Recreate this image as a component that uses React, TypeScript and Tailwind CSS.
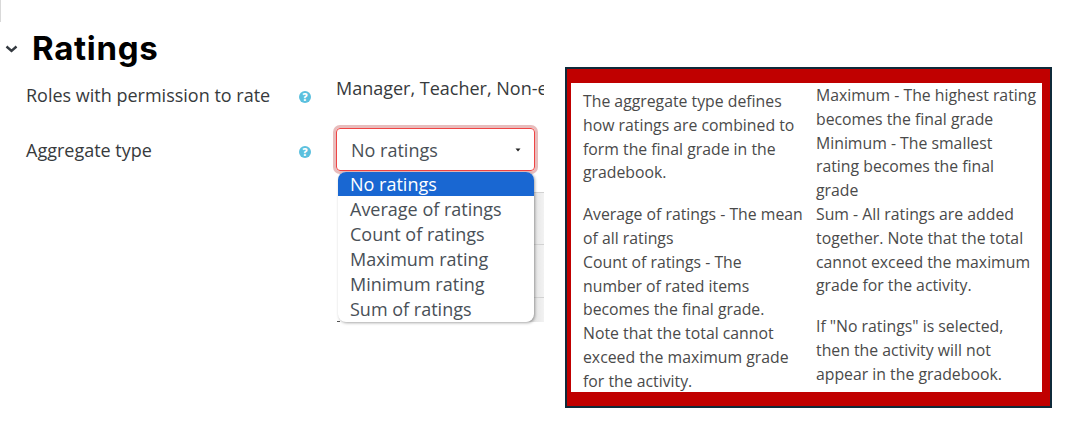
import React from "react";

const opts = ["Average of ratings", "Count of ratings", "Maximum rating", "Minimum rating", "Sum of ratings"];

function Help() {
  return (
    <svg width="12" height="12" viewBox="0 0 12 12" className="shrink-0">
      <circle cx="6" cy="6" r="6" fill="#5bc0de" />
      <text x="6" y="9.5" textAnchor="middle" fontSize="10" fontWeight="800" fill="#fff" fontFamily="'Open Sans',sans-serif">?</text>
    </svg>
  );
}

export default function App() {
  return (
    <div className="relative w-[1075px] h-[428px] bg-white overflow-hidden flex font-['Open_Sans',sans-serif] text-[#373a3c]">
      <div className="absolute left-0 top-0 w-px h-[22px] bg-[#d9d9d9]" />
      <div className="w-[544px] shrink-0 pl-[5px] pt-[29px] overflow-hidden">
        <div className="flex items-center h-[38px]">
          <svg width="14" height="14" viewBox="0 0 14 14" className="mt-[2px] shrink-0" fill="none" stroke="#343a40" strokeWidth="2.4">
            <path d="M1.5 4.5L6.5 9L11.5 4.5" />
          </svg>
          <h2 className="ml-[13px] text-[33px] leading-[38px] font-bold tracking-[0.7px] text-black font-['Inter',sans-serif]">Ratings</h2>
        </div>
        <div className="flex mt-[6px] pl-[21px] h-[55px] overflow-hidden">
          <div className="w-[273px] shrink-0 pt-[10px] text-[18px] leading-[24px] whitespace-nowrap">Roles with permission to rate</div>
          <div className="w-[37px] shrink-0 pt-[18px]"><Help /></div>
          <div className="whitespace-nowrap pt-[3px] text-[18px] leading-[24px]">Manager, Teacher, Non-editing teacher</div>
        </div>
        <div className="flex pl-[21px]">
          <div className="w-[273px] shrink-0 pt-[10px] text-[18px] leading-[24px]">Aggregate type</div>
          <div className="w-[37px] shrink-0 pt-[18px]"><Help /></div>
          <div className="w-[200px] shrink-0">
            <div className="h-[43px] w-[199px] rounded-[4px] border border-[#ef4444] ring-[3px] ring-[#e8bcbc] flex items-center justify-between pl-[14px] pr-[13px] text-[#495057] text-[18px]">
              <span className="mt-[1px]">No ratings</span>
              <svg width="6" height="4" viewBox="0 0 6 4"><path d="M0.5 0.5h5L3 3.5z" fill="#222" /></svg>
            </div>
            <div className="relative mt-[1px] w-[196px] ml-[2px] h-[150px]">
              <div className="absolute left-[190px] top-[20px] w-[20px] h-[130px] bg-gradient-to-r from-[#dcdcdc] to-[#f8f8f8]">
                <div className="absolute left-0 right-0 top-[0px] h-px bg-[#d2d2d2]" />
                <div className="absolute left-0 right-0 top-[52px] h-px bg-[#d2d2d2]" />
                <div className="absolute left-0 right-0 top-[105px] h-px bg-[#d2d2d2]" />
              </div>
              <div className="absolute -left-[1px] bottom-0 w-[3px] h-px bg-[#555]" />
              <div className="relative h-full bg-white rounded-[8px] shadow-[1px_1px_3px_rgba(0,0,0,0.35)] overflow-hidden text-[#495057] text-[18px] leading-[25px]">
                <div className="bg-[#1967d2] text-white pl-[12px] h-[24px] mb-[1px] leading-[25px]">No ratings</div>
                {opts.map((o) => (
                  <div key={o} className="pl-[12px] whitespace-nowrap">{o}</div>
                ))}
              </div>
            </div>
          </div>
        </div>
      </div>
      <div className="ml-[21px] mt-[67px] w-[487px] h-[341px] border-2 border-[#0f2a3a] bg-[#c00000] pt-[14px] pb-[14px] pl-[4px] pr-[8px] shrink-0">
        <div className="h-full bg-white flex text-[15.8px] leading-[23.8px] text-[#4a4a4a]">
          <div className="w-[245px] pl-[12px] pr-[12px] pt-[7px] shrink-0">
            <p className="mb-[18px]">The aggregate type defines how ratings are combined to form the final grade in the gradebook.</p>
            <p>Average of ratings - The mean of all ratings<br />Count of ratings - The number of rated items becomes the final grade. Note that the total cannot exceed the maximum grade for the activity.</p>
          </div>
          <div className="flex-1 pr-[5px] pt-[1px]">
            <p className="mb-[17px]">Maximum - The highest rating becomes the final grade<br />Minimum - The smallest rating becomes the final grade<br />Sum - All ratings are added together. Note that the total cannot exceed the maximum grade for the activity.</p>
            <p>If "No ratings" is selected, then the activity will not appear in the gradebook.</p>
          </div>
        </div>
      </div>
    </div>
  );
}
